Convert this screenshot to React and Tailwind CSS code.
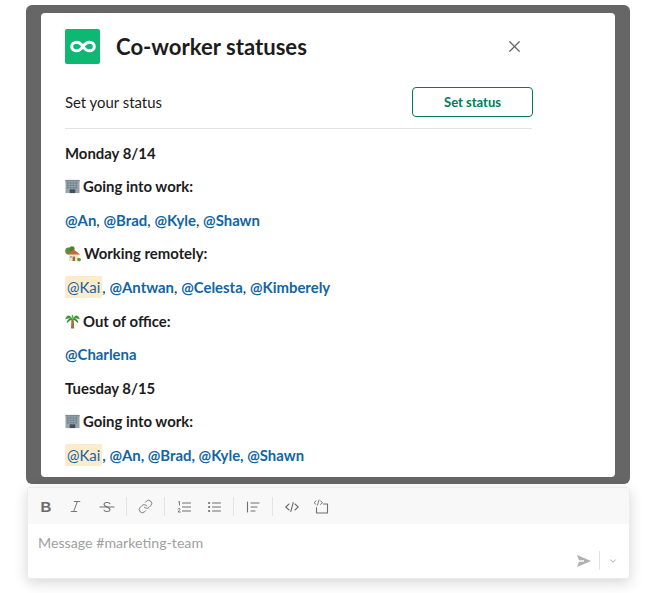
import React from 'react';
import { X, Italic, Link, ChevronDown } from 'lucide-react';

const Office = () => (
  <svg viewBox="0 0 16 16" className="w-[15px] h-[15px] shrink-0">
    <rect x="0.5" y="1" width="15" height="14" fill="#9aa5ab" />
    <rect x="0.5" y="1" width="15" height="1.5" fill="#7d8a91" />
    {[2, 5, 8, 11].map(x => [3.5, 6, 8.5].map(y => (
      <rect key={x + '-' + y} x={x} y={y} width="2" height="1.6" fill="#5f7f93" />
    )))}
    <rect x="5" y="11" width="6" height="4" fill="#46505a" />
  </svg>
);

const House = () => (
  <svg viewBox="0 0 16 16" className="w-[16px] h-[16px] shrink-0">
    <circle cx="3.6" cy="5" r="3.4" fill="#5c8f3a" />
    <circle cx="7" cy="2.8" r="2.6" fill="#4c7f32" />
    <rect x="4" y="8" width="9.5" height="7" fill="#f6e3c0" />
    <path d="M2.4 8.6 L8.8 3.4 L15.2 8.6 Z" fill="#c4683f" />
    <rect x="7.6" y="10.6" width="2.4" height="4.4" fill="#9a6a3c" />
    <rect x="5" y="10" width="1.8" height="1.8" fill="#7fb0cc" />
    <circle cx="14" cy="13.6" r="1.9" fill="#5c9a3a" />
  </svg>
);

const Palm = () => (
  <svg viewBox="0 0 16 16" className="w-[15px] h-[16px] shrink-0">
    <path d="M6.8 6 L9.2 6 L9.8 16 L6.4 16 Z" fill="#a0703c" />
    <path d="M8 6.5 C5.5 0.5 1.5 1 0.2 6.5 C3 4.8 5 5 8 6.5 Z" fill="#3f9a3a" />
    <path d="M8 6.5 C10.5 0.5 14.5 1 15.8 6.5 C13 4.8 11 5 8 6.5 Z" fill="#3f9a3a" />
    <path d="M8 6.5 C5 -0.5 11 -0.5 8 6.5 Z" fill="#4fae42" />
    <path d="M8 6 C4.5 5 2 6.5 1.8 10.5 C4 8 6 7 8 6 Z M8 6 C11.5 5 14 6.5 14.2 10.5 C12 8 10 7 8 6 Z" fill="#2f8a35" />
  </svg>
);

const Mention = ({ children }) => <span className="text-[#1264a3] font-bold">{children}</span>;

const Mentions = ({ names, boldComma, kai }) => (
  <div className="h-[33.6px] flex items-center">
    {kai && (
      <>
        <span className="bg-[#fbeccb] text-[#1264a3] rounded-[2px] h-[22px] px-[2px] flex items-center">@Kai</span>
        <span className={'whitespace-pre ' + (boldComma ? 'text-[#1264a3] font-bold' : 'text-[#1d1c1d]')}>, </span>
      </>
    )}
    {names.map((n, i) => (
      <span key={n} className="whitespace-pre">
        <Mention>@{n}</Mention>
        {i < names.length - 1 && <span className={boldComma ? 'text-[#1264a3] font-bold' : 'text-[#1d1c1d]'}>, </span>}
      </span>
    ))}
  </div>
);

const Heading = ({ icon, children }) => (
  <div className="h-[33.6px] flex items-center gap-[3px] font-bold text-[#1d1c1d]">
    {icon}
    <span>{children}</span>
  </div>
);

const Sep = () => <div className="w-px h-[19px] bg-[#e3e3e3]" />;

const ToolIcon = ({ className, children }) => (
  <svg viewBox="0 0 16 16" fill="none" stroke="#6f6f6f" strokeWidth="1.1" strokeLinecap="round" strokeLinejoin="round" className={'w-[16px] h-[16px] ' + (className || '')}>
    {children}
  </svg>
);

export default function App() {
  return (
    <div className="w-[657px] h-[593px] bg-white pt-[5px] overflow-hidden font-['Lato','Liberation_Sans',sans-serif] text-[14.9px]">
      <div className="ml-[26px] w-[604px] bg-[#666666] rounded-[6px] pl-[15px] pr-[15px] pt-[8px] pb-[7px]">
        <div className="bg-white rounded-[4px] h-[464px] overflow-hidden pl-[24px] pt-[16px]">
          <div className="w-[468px]">
            <div className="flex items-center h-[35px]">
              <div className="w-[35px] h-[35px] bg-[#0fb872] rounded-[2px] flex items-center justify-center">
                <svg viewBox="0 0 24 12" className="w-[26px] h-[13px]" fill="none" stroke="white" strokeWidth="2.8">
                  <path d="M12 6 C10 3 8.5 2 6 2 C3.5 2 1.6 3.6 1.6 6 C1.6 8.4 3.5 10 6 10 C8.5 10 10 9 12 6 C14 3 15.5 2 18 2 C20.5 2 22.4 3.6 22.4 6 C22.4 8.4 20.5 10 18 10 C15.5 10 14 9 12 6 Z" />
                </svg>
              </div>
              <h1 className="ml-[16px] text-[22.1px] font-bold text-[#1d1c1d]">Co-worker statuses</h1>
              <X className="ml-auto mr-[9px] w-[19px] h-[19px] text-[#616061]" strokeWidth={1.5} />
            </div>
            <div className="mt-[23px] flex items-center justify-between h-[30px]">
              <span className="text-[#1d1c1d] pt-[1px]">Set your status</span>
              <button className="w-[121px] h-[30px] pt-[2px] border border-[#007a5a] rounded-[4px] text-[#007a5a] text-[13px] font-bold">Set status</button>
            </div>
            <div className="mt-[11px] w-[467px] border-t border-[#e3e3e3]" />
            <div className="mt-[7px]">
              <Heading>Monday 8/14</Heading>
              <Heading icon={<Office />}>Going into work:</Heading>
              <Mentions names={['An', 'Brad', 'Kyle', 'Shawn']} />
              <Heading icon={<House />}>Working remotely:</Heading>
              <Mentions kai names={['Antwan', 'Celesta', 'Kimberely']} />
              <Heading icon={<Palm />}>Out of office:</Heading>
              <Mentions names={['Charlena']} />
              <Heading>Tuesday 8/15</Heading>
              <Heading icon={<Office />}>Going into work:</Heading>
              <Mentions kai boldComma names={['An', 'Brad', 'Kyle', 'Shawn']} />
            </div>
          </div>
        </div>
      </div>

      <div className="mt-[3px] mx-[27px] h-[92px] bg-white rounded-[3px] border border-[#ececec] shadow-[0_4px_14px_rgba(0,0,0,0.16)] overflow-hidden">
        <div className="h-[36px] pt-[1px] bg-[#f8f8f8] flex items-center pl-[10px] gap-[11px] text-[#6f6f6f]">
          <span className="w-[16px] text-center text-[15px] leading-none font-black font-['Liberation_Sans',sans-serif] text-[#6a6a6a]">B</span>
          <Italic className="w-[15px] h-[15px] ml-[3px]" strokeWidth={1.5} />
          <ToolIcon className="ml-[5px]">
            <path d="M1 8 H15" />
            <path d="M11 4.8 C10.6 3 5.4 3 5 5 C4.8 6.4 6 7 8 8 C10 9 11.3 9.6 11 11 C10.6 13 5.4 13 5 11" />
          </ToolIcon>
          <Sep />
          <Link className="w-[15px] h-[15px]" strokeWidth={1.4} />
          <Sep />
          <ToolIcon>
            <path d="M6.5 4 H14.5 M6.5 8 H14.5 M6.5 12 H14.5" />
            <path d="M2.5 3 L3.5 2.5 V6 M2 10 C2.5 9 4.3 9.2 4 10.5 L2 13 H4.4" strokeWidth="0.9" />
          </ToolIcon>
          <ToolIcon className="ml-[3px]">
            <path d="M6.5 4 H14.5 M6.5 8 H14.5 M6.5 12 H14.5" />
            <path d="M3 4 H3.2 M3 8 H3.2 M3 12 H3.2" strokeWidth="2" />
          </ToolIcon>
          <Sep />
          <ToolIcon>
            <path d="M2.5 3 V13 M6 4 H14 M6 8 H12 M6 12 H10" />
          </ToolIcon>
          <Sep />
          <ToolIcon>
            <path d="M5 5 L1.8 8 L5 11 M11 5 L14.2 8 L11 11 M9.2 3.5 L6.8 12.5" />
          </ToolIcon>
          <ToolIcon className="ml-[2px]">
            <path d="M10.5 5 H14.5 V14 H3.5 V8.5" />
            <path d="M3 2 L1 3.7 L3 5.4 M7.5 2 L9.5 3.7 L7.5 5.4 M6 1 L4.5 6.2" strokeWidth="0.9" />
          </ToolIcon>
        </div>
        <div className="pl-[10px] pt-[9px] text-[14.2px] leading-[20px] text-[#a0a0a0]">Message #marketing-team</div>
        <div className="flex items-center justify-end pr-[11px] -mt-[2px]">
          <svg viewBox="0 0 16 14" className="w-[16px] h-[14px]">
            <path d="M1 1 L15 7 L1 13 L3 7.8 H8 V6.2 H3 Z" fill="#b0b0b0" />
          </svg>
          <div className="w-px h-[19px] bg-[#e3e3e3] ml-[7px] mr-[8px]" />
          <ChevronDown className="w-[10px] h-[10px] text-[#a0a0a0]" strokeWidth={2} />
        </div>
      </div>
    </div>
  );
}
